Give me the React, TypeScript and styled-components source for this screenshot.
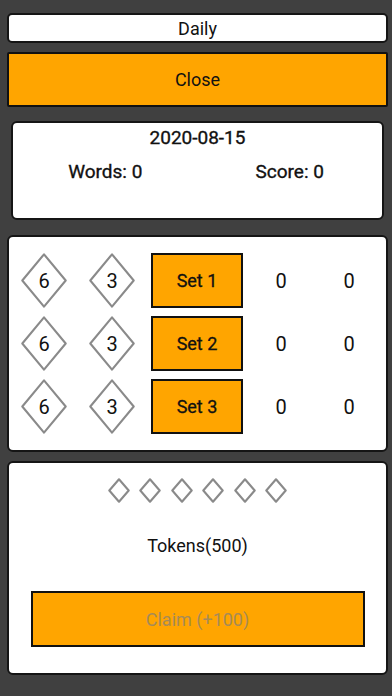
import React from "react";
import styled, { createGlobalStyle } from "styled-components";

const Global = createGlobalStyle`
  html, body { margin: 0; padding: 0; background: #404040; }
  body { font-family: Roboto, "Liberation Sans", Arial, sans-serif; color: #111; }
`;

const Page = styled.div`
  width: 392px;
  height: 696px;
  box-sizing: border-box;
  padding: 13px 4px 0 7px;
  display: flex;
  flex-direction: column;
  background: #404040;
`;

const TitleBar = styled.div`
  height: 30px;
  box-sizing: border-box;
  background: #fff;
  border: 2px solid #151515;
  border-radius: 5px;
  display: flex;
  align-items: center;
  justify-content: center;
  font-size: 18px;
`;

const CloseButton = styled.div`
  margin-top: 9px;
  height: 55px;
  box-sizing: border-box;
  background: #ffa500;
  border: 2px solid #111;
  border-radius: 2px;
  display: flex;
  align-items: center;
  justify-content: center;
  font-size: 18px;
`;

const Card = styled.div<{ $inset?: number; $top: number; $height: number }>`
  margin: ${(p) => p.$top}px ${(p) => p.$inset ?? 0}px 0 ${(p) => p.$inset ?? 0}px;
  height: ${(p) => p.$height}px;
  box-sizing: border-box;
  background: #fff;
  border: 2px solid #151515;
  border-radius: 6px;
`;

const DateCard = styled(Card)`
  display: flex;
  flex-direction: column;
  align-items: center;
  padding-top: 3px;
`;

const DateText = styled.div`
  font-size: 19px;
  -webkit-text-stroke: 0.35px #111;
  line-height: 24px;
`;

const StatsRow = styled.div`
  margin-top: 10px;
  width: 100%;
  display: grid;
  grid-template-columns: 1fr 1fr;
  font-size: 19px;
  -webkit-text-stroke: 0.35px #111;
  line-height: 24px;
  text-align: center;
`;

const SetsCard = styled(Card)`
  padding: 16px 0 0 1px;
  display: flex;
  flex-direction: column;
  gap: 8px;
`;

const SetRow = styled.div`
  display: grid;
  grid-template-columns: 68px 68px 102px 66px 70px;
  align-items: center;
  height: 55px;
  justify-items: center;
`;

const Diamond = styled.div<{ $w: number; $h: number }>`
  position: relative;
  width: ${(p) => p.$w}px;
  height: ${(p) => p.$h}px;
  display: flex;
  align-items: center;
  justify-content: center;
  font-size: 20px;
  svg { position: absolute; inset: 0; }
  span { position: relative; }
`;

const SetButton = styled.div`
  width: 92px;
  height: 55px;
  box-sizing: border-box;
  background: #ffa500;
  border: 2px solid #111;
  display: flex;
  align-items: center;
  justify-content: center;
  font-size: 18px;
  -webkit-text-stroke: 0.3px #111;
`;

const Score = styled.div`
  font-size: 20px;
`;

const TokenCard = styled(Card)`
  display: flex;
  flex-direction: column;
  align-items: center;
  padding-top: 15px;
`;

const DiamondStrip = styled.div`
  display: flex;
  gap: 9.5px;
`;

const TokensText = styled.div`
  margin-top: 31px;
  font-size: 18px;
  line-height: 24px;
`;

const ClaimButton = styled.div`
  margin-top: 33px;
  width: 334px;
  height: 56px;
  box-sizing: border-box;
  background: #ffa500;
  border: 2px solid #111;
  display: flex;
  align-items: center;
  justify-content: center;
  font-size: 18px;
  color: #a68b58;
`;

const DiamondShape = ({ w, h, sw }: { w: number; h: number; sw: number }) => (
  <svg width={w} height={h} viewBox={`0 0 ${w} ${h}`}>
    <polygon
      points={`${w / 2},${sw} ${w - sw},${h / 2} ${w / 2},${h - sw} ${sw},${h / 2}`}
      fill="none"
      stroke="#8a8a8a"
      strokeWidth={sw * 1.6}
      strokeLinejoin="round"
    />
  </svg>
);

const NumDiamond = ({ n }: { n: number }) => (
  <Diamond $w={46} $h={55}>
    <DiamondShape w={46} h={55} sw={1.3} />
    <span>{n}</span>
  </Diamond>
);

export default function App() {
  const sets = [1, 2, 3];
  return (
    <>
      <Global />
      <Page>
        <TitleBar>Daily</TitleBar>
        <CloseButton>Close</CloseButton>
        <DateCard $inset={4} $top={14} $height={99}>
          <DateText>2020-08-15</DateText>
          <StatsRow>
            <div>Words: 0</div>
            <div>Score: 0</div>
          </StatsRow>
        </DateCard>
        <SetsCard $top={15} $height={217}>
          {sets.map((s) => (
            <SetRow key={s}>
              <NumDiamond n={6} />
              <NumDiamond n={3} />
              <SetButton>Set {s}</SetButton>
              <Score>0</Score>
              <Score>0</Score>
            </SetRow>
          ))}
        </SetsCard>
        <TokenCard $top={9} $height={214}>
          <DiamondStrip>
            {[0, 1, 2, 3, 4, 5].map((i) => (
              <Diamond key={i} $w={22} $h={25}>
                <DiamondShape w={22} h={25} sw={1.3} />
              </Diamond>
            ))}
          </DiamondStrip>
          <TokensText>Tokens(500)</TokensText>
          <ClaimButton>Claim (+100)</ClaimButton>
        </TokenCard>
      </Page>
    </>
  );
}
